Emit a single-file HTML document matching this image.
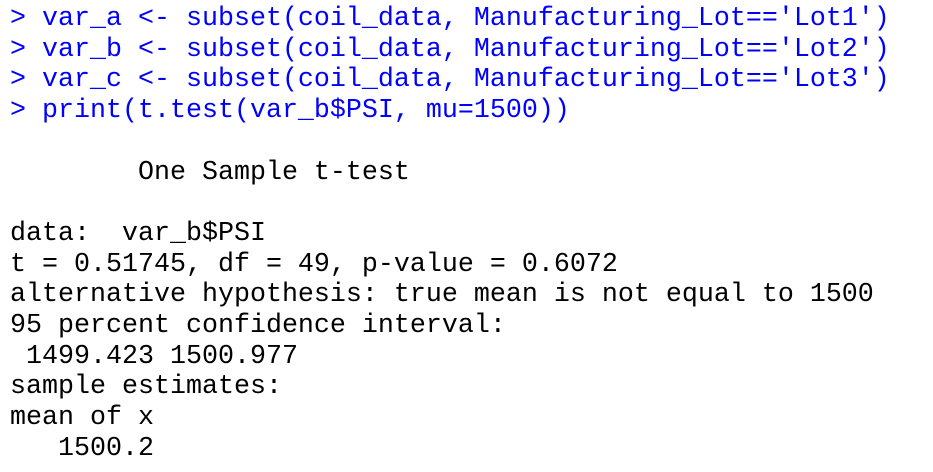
<!DOCTYPE html>
<html><head><style>
html,body{margin:0;padding:0;background:#fff;width:933px;height:472px;overflow:hidden}
pre{margin:0;position:absolute;left:10px;top:4px;font-family:"Liberation Mono",monospace;font-size:26.67px;line-height:30.7px;color:#000}
.b{color:#0000ff}
</style></head><body>
<pre><span class="b">&gt; var_a &lt;- subset(coil_data, Manufacturing_Lot=='Lot1')
&gt; var_b &lt;- subset(coil_data, Manufacturing_Lot=='Lot2')
&gt; var_c &lt;- subset(coil_data, Manufacturing_Lot=='Lot3')
&gt; print(t.test(var_b$PSI, mu=1500))</span>

        One Sample t-test

data:  var_b$PSI
t = 0.51745, df = 49, p-value = 0.6072
alternative hypothesis: true mean is not equal to 1500
95 percent confidence interval:
 1499.423 1500.977
sample estimates:
mean of x
   1500.2
</pre>
</body></html>
